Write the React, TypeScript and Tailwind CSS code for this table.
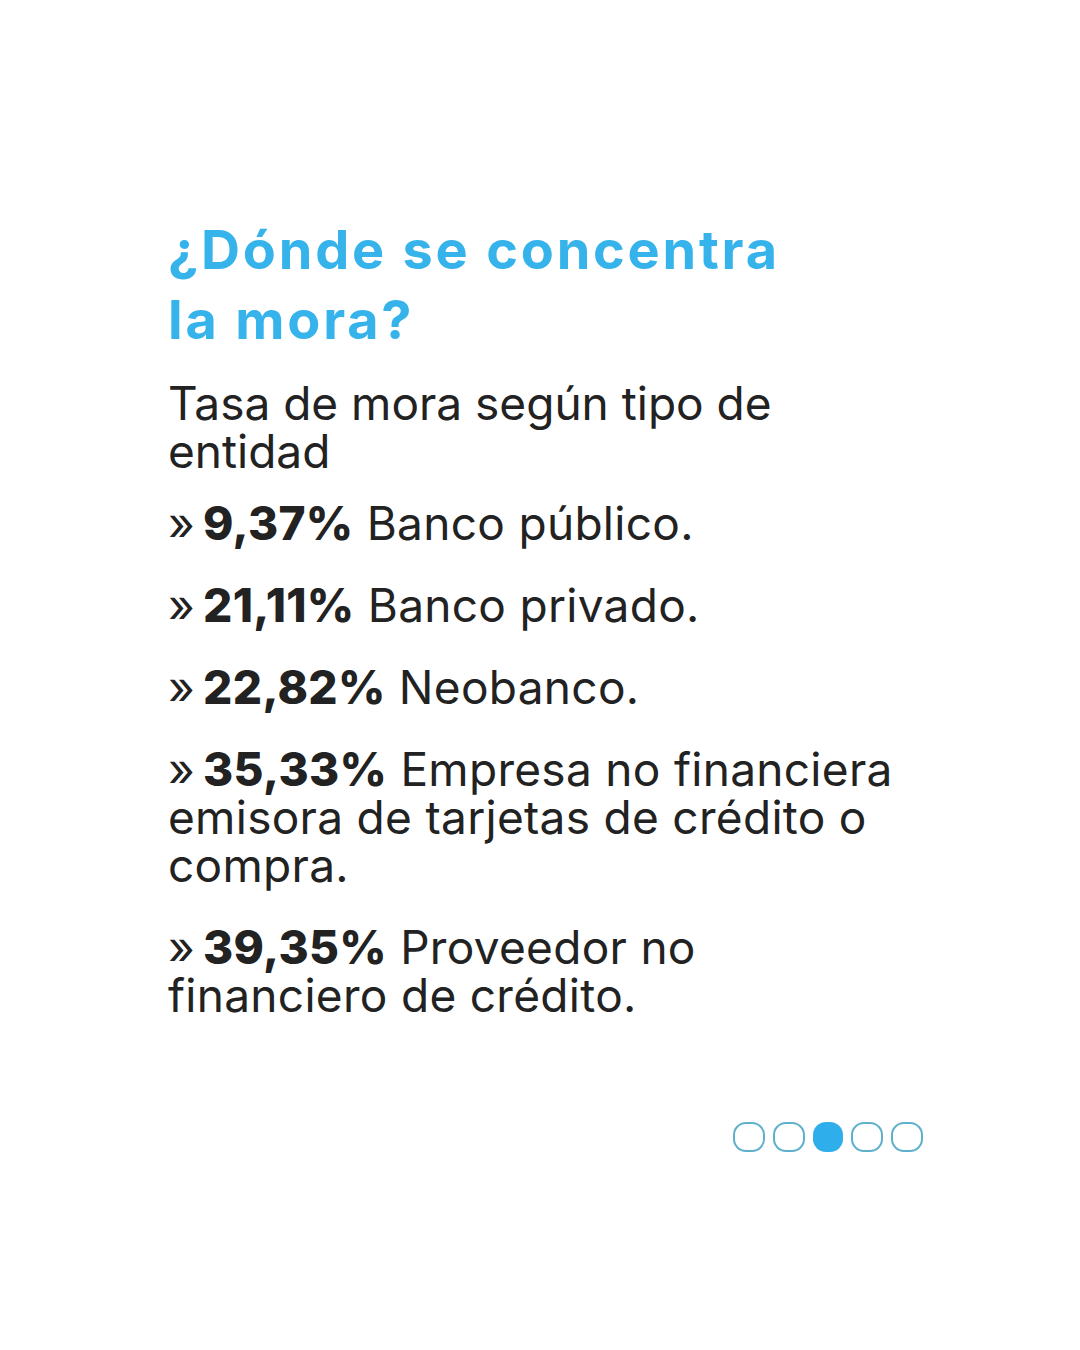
import React from 'react'

// each item is written line by line, breaking where the reference breaks
const items: { pct: string; lines: string[] }[] = [
  { pct: '9,37%', lines: ['Banco público.'] },
  { pct: '21,11%', lines: ['Banco privado.'] },
  { pct: '22,82%', lines: ['Neobanco.'] },
  { pct: '35,33%', lines: ['Empresa no financiera', 'emisora de tarjetas de crédito o', 'compra.'] },
  { pct: '39,35%', lines: ['Proveedor no', 'financiero de crédito.'] },
]

const Dot = ({ active }: { active?: boolean }) =>
  active ? (
    <div className="w-[30px] h-[30px] rounded-[13px] bg-[#2eaeea]" />
  ) : (
    <div className="w-[32px] h-[30px] rounded-[13px] border-2 border-[#5fb0cc]" />
  )

export default function App() {
  return (
    <div
      className="w-[1080px] h-[1350px] bg-white flex flex-col pl-[168px] pr-[120px] pt-[215px]"
      style={{ fontFamily: 'Inter, "Noto Sans", sans-serif' }}
    >
      {/* Título */}
      <h1 className="text-[54px] leading-[70px] font-bold text-[#35b3ea] tracking-[2.8px] whitespace-nowrap">
        ¿Dónde se concentra
        <br />
        la mora?
      </h1>

      {/* Subtítulo */}
      <p className="mt-[24px] text-[46px] leading-[48px] text-[#222222] whitespace-nowrap">
        Tasa de mora según tipo de
        <br />
        entidad
      </p>

      {/* Lista de tasas */}
      <ul className="mt-[24px] flex flex-col gap-[34px] text-[46px] leading-[48px] text-[#222222] whitespace-nowrap tracking-[0.3px]">
        {items.map((it) => (
          <li key={it.pct}>
            {it.lines.map((line, i) => (
              <div key={i}>
                {i === 0 && (
                  <>
                    <span className="mr-[8px]">»</span>
                    <span className="font-extrabold">{it.pct}</span>{' '}
                  </>
                )}
                {line}
              </div>
            ))}
          </li>
        ))}
      </ul>

      {/* Paginación */}
      <div className="mt-auto mb-[198px] flex justify-end gap-[8px] pr-[37px]">
        <Dot />
        <Dot />
        <Dot active />
        <Dot />
        <Dot />
      </div>
    </div>
  )
}
